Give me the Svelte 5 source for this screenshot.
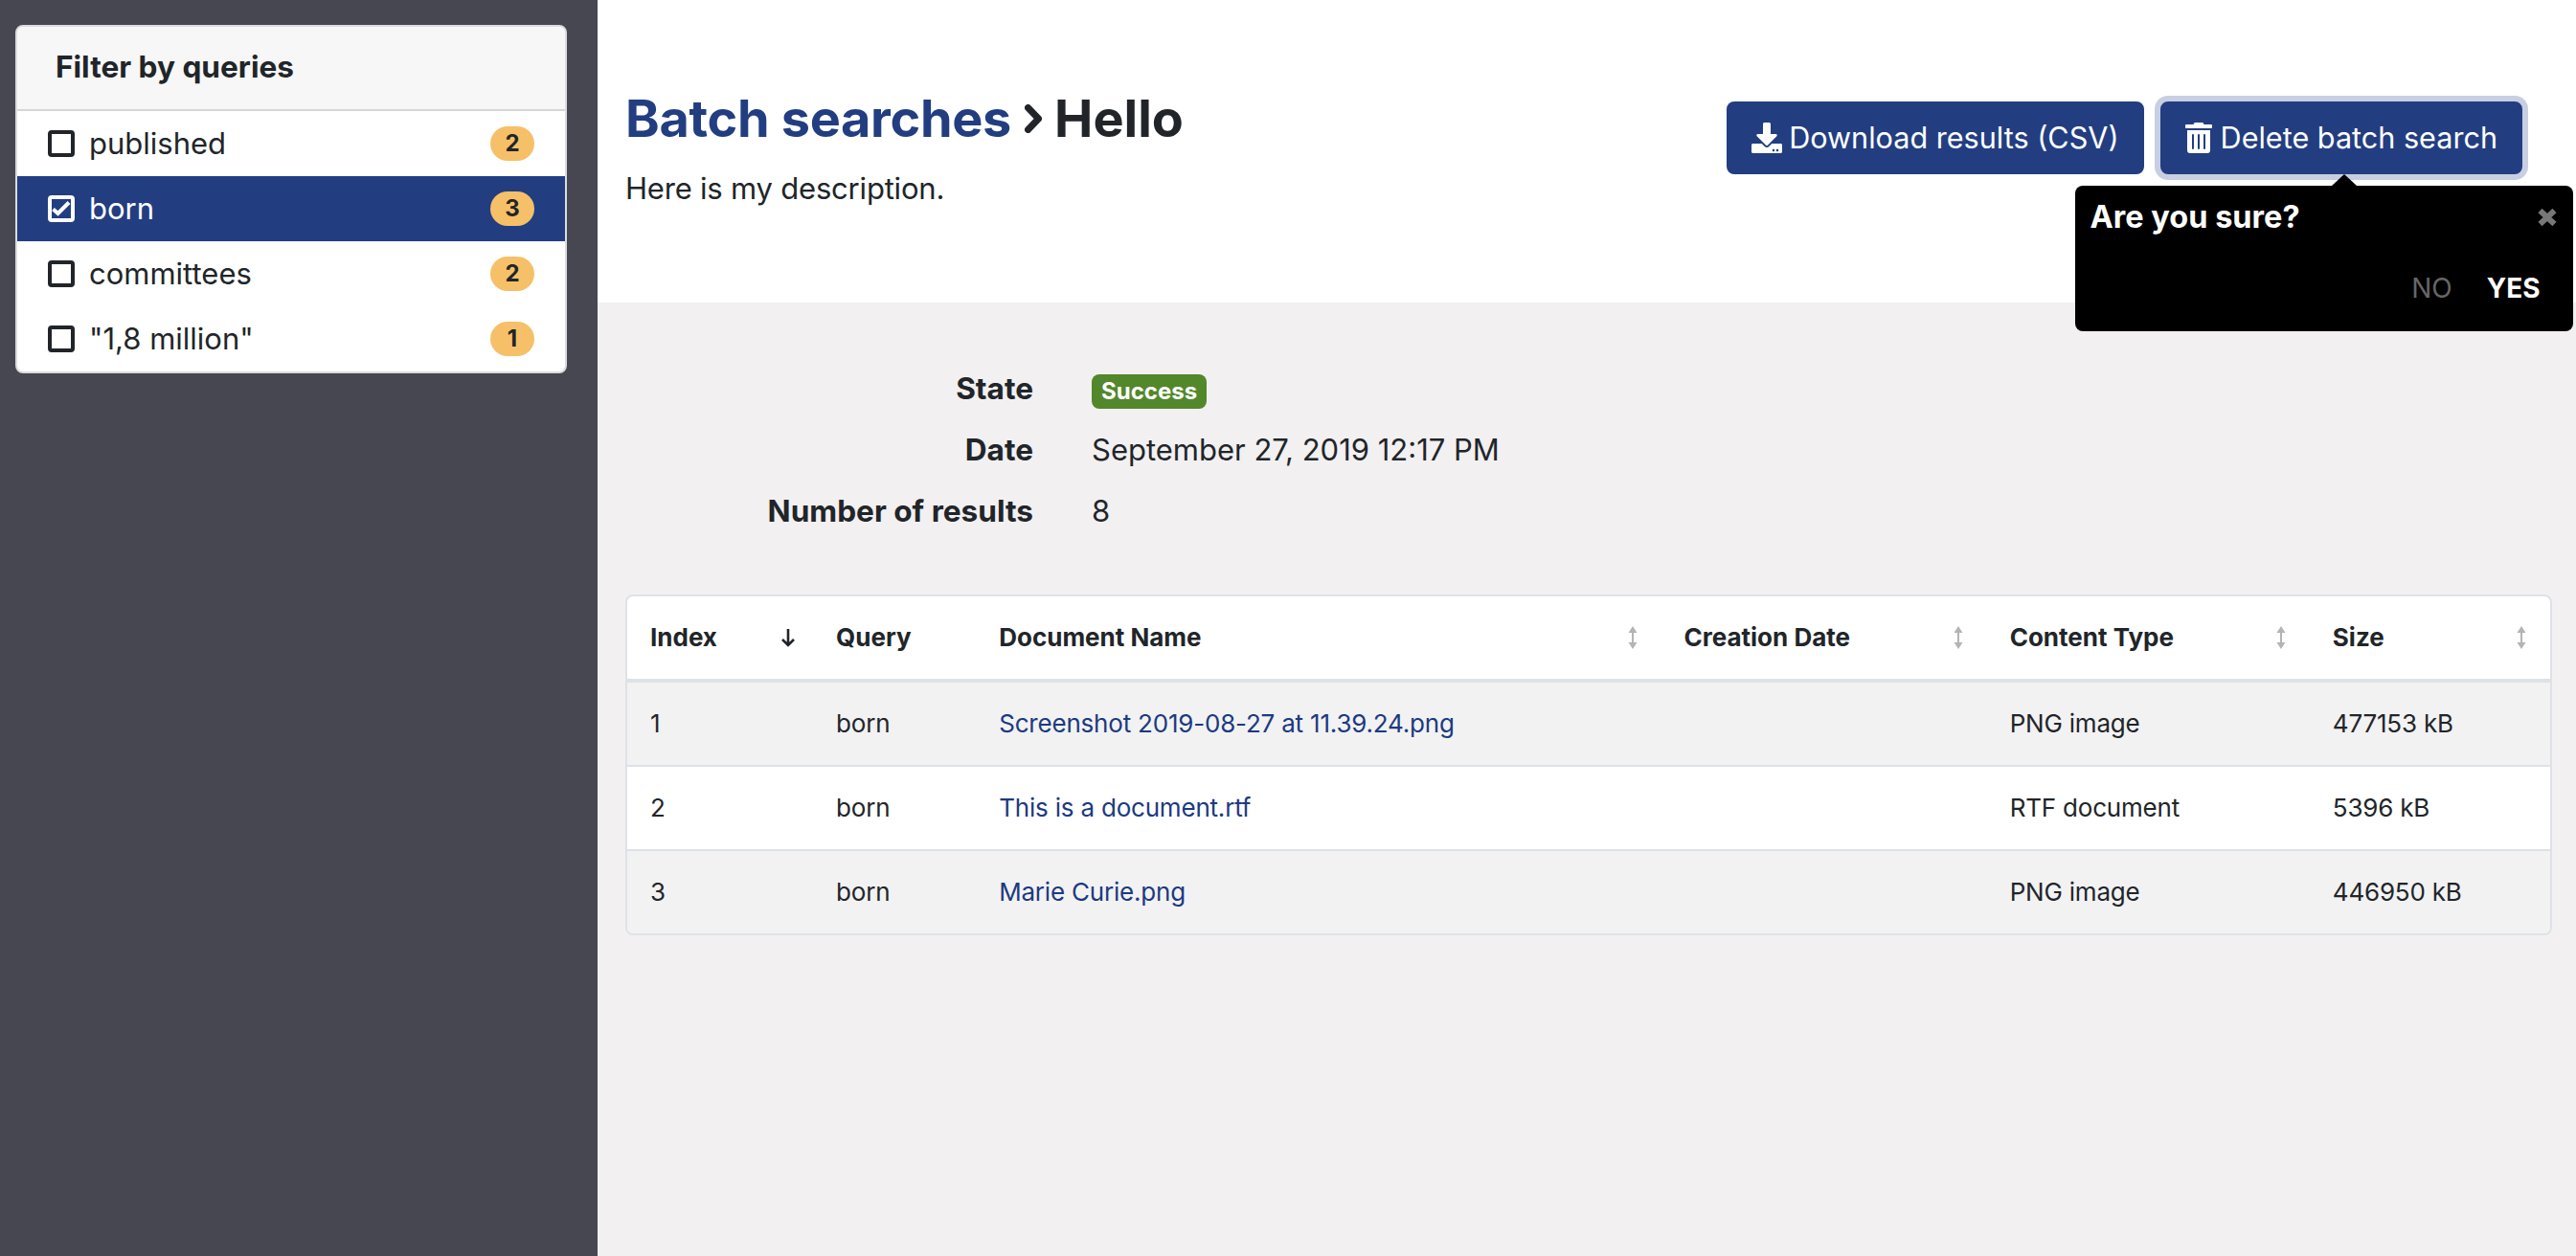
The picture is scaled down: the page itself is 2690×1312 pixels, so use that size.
<script>
	const queries = [
		{ label: 'published', count: 2, active: false },
		{ label: 'born', count: 3, active: true },
		{ label: 'committees', count: 2, active: false },
		{ label: '"1,8 million"', count: 1, active: false }
	];

	const columns = [
		{ label: 'Index', width: 194, sort: 'down' },
		{ label: 'Query', width: 170, sort: '' },
		{ label: 'Document Name', width: 715, sort: 'both' },
		{ label: 'Creation Date', width: 340, sort: 'both' },
		{ label: 'Content Type', width: 337, sort: 'both' },
		{ label: 'Size', width: 251, sort: 'both' }
	];

	const rows = [
		{ index: 1, query: 'born', name: 'Screenshot 2019-08-27 at 11.39.24.png', type: 'PNG image', size: '477153 kB' },
		{ index: 2, query: 'born', name: 'This is a document.rtf', type: 'RTF document', size: '5396 kB' },
		{ index: 3, query: 'born', name: 'Marie Curie.png', type: 'PNG image', size: '446950 kB' }
	];
</script>

<div class="page">
	<aside class="sidebar">
		<div class="card">
			<div class="card-header">Filter by queries</div>
			<ul class="query-list">
				{#each queries as query}
					<li class="query" class:active={query.active}>
						<span class="checkbox">
							{#if query.active}
								<svg viewBox="0 0 20 20" width="20" height="20">
									<path d="M1.5 10.5l5 4.5L18 3.5" fill="none" stroke="currentColor" stroke-width="4" />
								</svg>
							{/if}
						</span>
						<span class="query-label">{query.label}</span>
						<span class="badge-count">{query.count}</span>
					</li>
				{/each}
			</ul>
		</div>
	</aside>

	<main class="main">
		<header class="header">
			<div class="heading">
				<h1 class="title">
					<a href="#batch" class="title-link">Batch searches</a>
					<svg class="chevron" viewBox="0 0 18 30" width="18" height="30">
						<path d="M3.5 3.5L14.5 15L3.5 26.5" fill="none" stroke="currentColor" stroke-width="7" stroke-linecap="round" stroke-linejoin="round" />
					</svg>
					<span>Hello</span>
				</h1>
				<p class="description">Here is my description.</p>
			</div>
			<div class="actions">
				<button class="btn">
					<svg class="btn-icon" viewBox="0 0 512 512" width="32" height="32">
						<path fill="currentColor" d="M216 0h80c13.3 0 24 10.7 24 24v168h87.7c17.8 0 26.7 21.5 14.1 34.1L269.7 378.3c-7.5 7.5-19.8 7.5-27.3 0L90.1 226.1c-12.6-12.6-3.7-34.1 14.1-34.1H192V24c0-13.3 10.7-24 24-24zm296 376v112c0 13.3-10.7 24-24 24H24c-13.3 0-24-10.7-24-24V376c0-13.3 10.7-24 24-24h146.7l49 49c20.1 20.1 52.5 20.1 72.6 0l49-49H488c13.3 0 24 10.7 24 24zm-124 88c0-11-9-20-20-20s-20 9-20 20 9 20 20 20 20-9 20-20zm64 0c0-11-9-20-20-20s-20 9-20 20 9 20 20 20 20-9 20-20z" />
					</svg>
					Download results (CSV)
				</button>
				<div class="delete-wrap">
					<button class="btn btn-focus">
						<svg class="btn-icon" viewBox="0 0 448 512" width="28" height="32">
							<path fill="currentColor" d="M32 464a48 48 0 0 0 48 48h288a48 48 0 0 0 48-48V128H32zm272-256a16 16 0 0 1 32 0v224a16 16 0 0 1-32 0zm-96 0a16 16 0 0 1 32 0v224a16 16 0 0 1-32 0zm-96 0a16 16 0 0 1 32 0v224a16 16 0 0 1-32 0zM432 32H312l-9.4-18.7A24 24 0 0 0 281.1 0H166.8a23.72 23.72 0 0 0-21.4 13.3L136 32H16A16 16 0 0 0 0 48v32a16 16 0 0 0 16 16h416a16 16 0 0 0 16-16V48a16 16 0 0 0-16-16z" />
						</svg>
						Delete batch search
					</button>
					<div class="popover">
						<span class="popover-arrow"></span>
						<div class="popover-head">
							<span class="popover-title">Are you sure?</span>
							<svg class="popover-close" viewBox="0 0 20 18" width="20" height="18">
								<path d="M2.5 2L17.5 16M17.5 2L2.5 16" stroke="currentColor" stroke-width="6" />
							</svg>
						</div>
						<div class="popover-actions">
							<span class="popover-no">NO</span>
							<span class="popover-yes">YES</span>
						</div>
					</div>
				</div>
			</div>
		</header>

		<section class="content">
			<dl class="details">
				<dt>State</dt>
				<dd><span class="badge-success">Success</span></dd>
				<dt>Date</dt>
				<dd>September 27, 2019 12:17 PM</dd>
				<dt>Number of results</dt>
				<dd>8</dd>
			</dl>

			<div class="table-wrap">
				<table class="table">
					<colgroup>
						{#each columns as col}
							<col style="width: {col.width}px" />
						{/each}
					</colgroup>
					<thead>
						<tr>
							{#each columns as col}
								<th>
									<div class="th-inner">
										<span>{col.label}</span>
										{#if col.sort === 'down'}
											<svg class="sort-down" viewBox="0 0 16 20" width="16" height="20">
												<path d="M8 1V18M2 12L8 18L14 12" fill="none" stroke="#212529" stroke-width="2.6" />
											</svg>
										{:else if col.sort === 'both'}
											<svg class="sort" viewBox="0 0 14 26" width="14" height="26">
												<path d="M7 3V23" stroke="#b4b4b4" stroke-width="2" />
												<path d="M7 1L11.5 8H2.5ZM7 25L2.5 18H11.5Z" fill="#b4b4b4" />
											</svg>
										{/if}
									</div>
								</th>
							{/each}
						</tr>
					</thead>
					<tbody>
						{#each rows as row}
							<tr>
								<td>{row.index}</td>
								<td>{row.query}</td>
								<td><a href="#doc" class="doc-link">{row.name}</a></td>
								<td></td>
								<td>{row.type}</td>
								<td>{row.size}</td>
							</tr>
						{/each}
					</tbody>
				</table>
			</div>
		</section>
	</main>
</div>

<style>
	:global(body) {
		margin: 0;
		font-family: Inter, 'Liberation Sans', sans-serif;
		font-size: 31px;
		line-height: 48px;
		color: #212529;
		background: #f2f0f1;
	}

	.page {
		display: flex;
		height: 1312px;
		overflow: hidden;
	}

	.sidebar {
		flex: 0 0 624px;
		box-sizing: border-box;
		padding: 26px 32px 0 16px;
		background: #464751;
	}

	.card {
		box-sizing: border-box;
		background: #fff;
		border: 2px solid #dcdcde;
		border-radius: 8px;
		overflow: hidden;
	}

	.card-header {
		box-sizing: border-box;
		height: 88px;
		padding: 18px 40px;
		font-size: 31.6px;
		font-weight: 700;
		background: #f7f7f7;
		border-bottom: 2px solid #d6d6d6;
	}

	.query-list {
		margin: 0;
		padding: 0;
		list-style: none;
	}

	.query {
		display: flex;
		align-items: center;
		height: 68px;
		padding: 0 32px;
	}

	.query.active {
		color: #fff;
		background: #223e81;
	}

	.checkbox {
		display: flex;
		align-items: center;
		justify-content: center;
		box-sizing: border-box;
		width: 28px;
		height: 28px;
		margin-right: 15px;
		border: 4px solid currentColor;
		border-radius: 4px;
	}

	.query-label {
		flex: 1;
	}

	.badge-count {
		min-width: 22px;
		padding: 6px 12px;
		font-size: 24px;
		font-weight: 700;
		line-height: 24px;
		text-align: center;
		color: #212529;
		background: #f6c068;
		border-radius: 18px;
	}

	.main {
		flex: 1;
		min-width: 0;
		display: flex;
		flex-direction: column;
	}

	.header {
		box-sizing: border-box;
		display: flex;
		justify-content: space-between;
		height: 316px;
		padding: 90px 56px 0 29px;
		background: #fff;
	}

	.title {
		display: flex;
		align-items: center;
		gap: 13.5px;
		margin: 0;
		font-size: 54px;
		font-weight: 700;
		line-height: 67px;
	}

	.title-link {
		letter-spacing: -0.3px;
		color: #223e81;
		text-decoration: none;
	}

	.description {
		margin: 16px 0 0;
		letter-spacing: -0.2px;
	}

	.actions {
		display: flex;
		align-items: flex-start;
		gap: 17px;
		margin-top: 16px;
	}

	.btn {
		display: flex;
		align-items: center;
		gap: 7px;
		height: 76px;
		padding: 0 24px;
		font: inherit;
		font-size: 30.6px;
		color: #fff;
		background: #223e81;
		border: 2px solid #223e81;
		border-radius: 8px;
	}

	.btn-focus {
		gap: 9px;
		box-shadow: 0 0 0 6px #c8cfe2;
	}

	.delete-wrap {
		position: relative;
	}

	.popover {
		position: absolute;
		top: 88px;
		left: -89px;
		box-sizing: border-box;
		width: 520px;
		height: 152px;
		padding: 9px 16px;
		color: #fff;
		background: #000;
		border-radius: 8px;
	}

	.popover-arrow {
		position: absolute;
		top: -12px;
		left: 268px;
		width: 0;
		height: 0;
		border-left: 13px solid transparent;
		border-right: 13px solid transparent;
		border-bottom: 12px solid #000;
	}

	.popover-head {
		display: flex;
		align-items: center;
		justify-content: space-between;
	}

	.popover-title {
		font-size: 32.5px;
		font-weight: 700;
	}

	.popover-close {
		margin-right: 1px;
		color: #777;
	}

	.popover-actions {
		display: flex;
		justify-content: flex-end;
		gap: 36px;
		margin-top: 29px;
		padding-right: 18px;
		font-size: 28px;
		line-height: 42px;
	}

	.popover-no {
		color: #666;
	}

	.popover-yes {
		font-weight: 700;
	}

	.content {
		padding: 66px 25px 0 29px;
	}

	.details {
		display: grid;
		grid-template-columns: 426px 1fr;
		column-gap: 61px;
		row-gap: 16px;
		margin: 0 0 63px;
	}

	.details dt {
		font-size: 31.6px;
		font-weight: 700;
		text-align: right;
	}

	.details dd {
		margin: 0;
	}

	.badge-success {
		display: inline-block;
		padding: 6px 10px;
		font-size: 24px;
		font-weight: 700;
		line-height: 24px;
		color: #fff;
		background: #53872b;
		border-radius: 8px;
	}

	.table-wrap {
		background: #fff;
		border: 2px solid #dee2e6;
		border-radius: 8px;
		overflow: hidden;
	}

	.table {
		width: 100%;
		table-layout: fixed;
		border-collapse: separate;
		border-spacing: 0;
		font-size: 26px;
		line-height: 42px;
	}

	th {
		height: 90px;
		box-sizing: border-box;
		padding: 0 23px 0 24px;
		font-weight: 700;
		text-align: left;
		border-bottom: 4px solid #dee2e6;
	}

	.th-inner {
		display: flex;
		align-items: center;
		justify-content: space-between;
	}

	.sort-down {
		margin-right: -5px;
	}

	td {
		height: 88px;
		box-sizing: border-box;
		padding: 0 24px;
		letter-spacing: -0.2px;
		border-top: 2px solid #dee2e6;
	}

	tbody tr:first-child td {
		border-top: 0;
		height: 86px;
	}

	tbody tr:nth-child(odd) {
		background: #f2f2f3;
	}

	.doc-link {
		color: #1c3a80;
		text-decoration: none;
	}
</style>
